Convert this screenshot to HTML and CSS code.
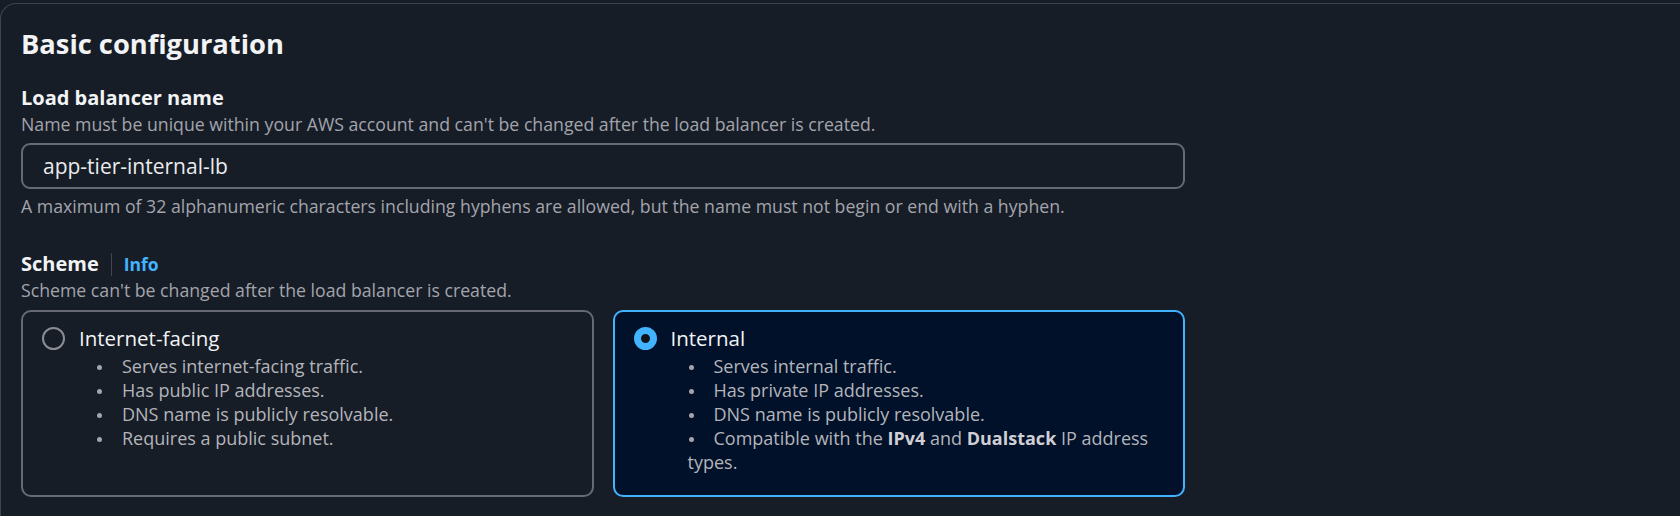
FILE: index.html
```html
<!DOCTYPE html>
<html lang="en">
<head>
    <meta charset="UTF-8">
    <meta name="viewport" content="width=device-width, initial-scale=1.0">
    <title>Basic configuration</title>
    <link rel="stylesheet" href="styles.css">
</head>
<body>
    <div class="container">
        <h2 class="section-title">Basic configuration</h2>
        <div class="form">
            <div class="field">
                <label class="field-label" for="lbName">Load balancer name</label>
                <div class="field-desc">Name must be unique within your AWS account and can't be changed after the load balancer is created.</div>
                <input type="text" id="lbName" class="text-input" value="app-tier-internal-lb">
                <div class="field-hint">A maximum of 32 alphanumeric characters including hyphens are allowed, but the name must not begin or end with a hyphen.</div>
            </div>

            <div class="field scheme-field">
                <div class="label-row">
                    <span class="field-label">Scheme</span>
                    <a class="info-link" href="#">Info</a>
                </div>
                <div class="field-desc">Scheme can't be changed after the load balancer is created.</div>
                <div class="tiles">
                    <div class="tile">
                        <div class="tile-head">
                            <span class="radio"></span>
                            <span class="tile-title">Internet-facing</span>
                        </div>
                        <ul class="tile-list">
                            <li>Serves internet-facing traffic.</li>
                            <li>Has public IP addresses.</li>
                            <li>DNS name is publicly resolvable.</li>
                            <li>Requires a public subnet.</li>
                        </ul>
                    </div>
                    <div class="tile selected">
                        <div class="tile-head">
                            <span class="radio checked"></span>
                            <span class="tile-title">Internal</span>
                        </div>
                        <ul class="tile-list">
                            <li>Serves internal traffic.</li>
                            <li>Has private IP addresses.</li>
                            <li>DNS name is publicly resolvable.</li>
                            <li>Compatible with the <strong>IPv4</strong> and <strong>Dualstack</strong> IP address types.</li>
                        </ul>
                    </div>
                </div>
            </div>
        </div>
    </div>
</body>
</html>
```

FILE: styles.css
```css
body {
    margin: 0;
    padding: 0;
    background-color: #161d26;
    font-family: "Open Sans", "Noto Sans", Arial, sans-serif;
    color: #e9ebed;
    overflow: hidden;
}
.container {
    margin-top: 3px;
    padding: 22px 20px 40px 20px;
    border-top: 1px solid #40454d;
    border-left: 1px solid #40454d;
    border-top-left-radius: 16px;
    min-height: 600px;
}
.section-title {
    margin: 0;
    font-size: 27.3px;
    line-height: 36px;
    font-weight: 700;
    color: #f2f3f5;
}
.form {
    max-width: 1164px;
    margin-top: 22px;
}
.field-label {
    display: block;
    font-size: 20px;
    line-height: 28px;
    font-weight: 700;
    color: #f2f3f5;
}
.field-desc {
    font-size: 17.7px;
    line-height: 24px;
    color: #a4a4ad;
}
.text-input {
    display: block;
    box-sizing: border-box;
    width: 100%;
    height: 46px;
    margin-top: 7px;
    padding: 0 20px;
    border: 2px solid #676a73;
    border-radius: 9px;
    background: transparent;
    font-family: inherit;
    font-size: 21px;
    color: #e9ebed;
    outline: none;
}
.field-hint {
    margin-top: 5px;
    font-size: 17.7px;
    line-height: 24px;
    color: #a4a4ad;
}
.scheme-field {
    margin-top: 32px;
}
.label-row {
    display: flex;
    align-items: center;
}
.info-link {
    margin-left: 12px;
    padding-left: 12px;
    border-left: 1px solid #414750;
    height: 23px;
    line-height: 23px;
    font-size: 17.5px;
    font-weight: 700;
    color: #42b4ff;
    text-decoration: none;
}
.tiles {
    display: grid;
    grid-template-columns: 1fr 1fr;
    gap: 19px;
    margin-top: 8px;
}
.tile {
    border: 2px solid #676a73;
    border-radius: 10px;
    padding: 12px 19px 21px 19px;
}
.tile.selected {
    border-color: #42b4ff;
    background-color: #001129;
}
.tile-head {
    display: flex;
    align-items: center;
    gap: 14px;
}
.radio {
    box-sizing: border-box;
    width: 23px;
    height: 23px;
    border: 2px solid #8c8c94;
    border-radius: 50%;
    flex-shrink: 0;
}
.radio.checked {
    border: 7.5px solid #42b4ff;
    background-color: #0f141a;
}
.tile-title {
    font-size: 20.5px;
    line-height: 28px;
    color: #f2f3f5;
}
.tile-list {
    list-style: none;
    margin: 2px 0 0 0;
    padding: 0 0 0 54px;
    font-size: 18px;
    line-height: 24px;
    color: #b4b4bb;
}
.tile-list li::before {
    content: "";
    display: inline-block;
    width: 5px;
    height: 5px;
    margin: 0 20px 0 1px;
    border-radius: 50%;
    background-color: #a4a4ad;
    vertical-align: 3px;
}
.tile-list strong {
    color: #cfcfd5;
}
```
